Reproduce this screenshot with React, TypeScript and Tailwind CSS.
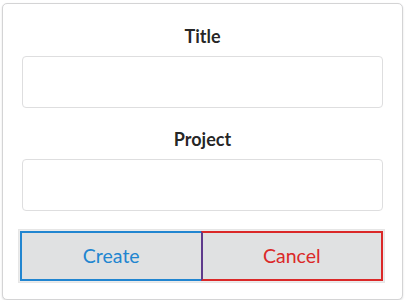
export default function App() {
  const fields = ["Title", "Project"];

  return (
    <div className="pt-[3px] pl-[2px] font-['Lato',sans-serif]">
      <div className="w-[401px] h-[297px] rounded-[5px] border border-[#d4d4d5] bg-white shadow-[0_1px_2px_0_rgba(34,36,38,0.15)] px-[19px] pt-[20px]">
        {fields.map((label, i) => (
          <div key={label} className={i > 0 ? "mt-[19px]" : ""}>
            <label className="block text-center text-[18px] leading-[24px] font-bold text-[rgba(0,0,0,0.87)]">
              {label}
            </label>
            <input
              type="text"
              className="mt-[8px] block w-full h-[52px] rounded-[4px] border border-[#dededf] bg-white px-3 outline-none"
            />
          </div>
        ))}

        <div className="mt-[18px] ml-[-4px] mr-[-2px] flex h-[54px] border border-[#e6e6e6] p-[1px] bg-[#ececec]">
          <button className="flex-1 border-2 border-r-0 border-[#2185d0] bg-[#e0e1e2] text-[19.5px] text-[#2185d0]">
            Create
          </button>
          <button className="flex-1 border-2 border-[#db2828] border-l-[#5e3a8c] bg-[#e0e1e2] text-[19.5px] text-[#db2828]">
            Cancel
          </button>
        </div>
      </div>
    </div>
  );
}
